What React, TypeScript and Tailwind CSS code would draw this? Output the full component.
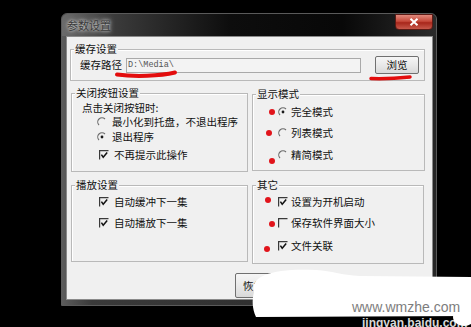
import React from 'react';

const cjk = "font-['Noto_Sans_CJK_SC','Noto_Sans',sans-serif]";

function Radio({ checked }: { checked?: boolean }) {
  return (
    <svg width="10" height="10" viewBox="0 0 10 10" className="shrink-0">
      <path d="M8 2 A4.2 4.2 0 0 0 2 8" fill="none" stroke="#6a6a6a" strokeWidth="1.1" />
      {checked && <circle cx="5" cy="5" r="1.4" fill="#1a1a1a" />}
    </svg>
  );
}

function Check({ checked }: { checked?: boolean }) {
  return (
    <svg width="10" height="10" viewBox="0 0 10 10" className="shrink-0">
      <path d="M0.6 9.5 V0.6 H9.5" fill="none" stroke="#3a3a3a" strokeWidth="1.2" />
      {checked && <path d="M2.4 4.6 L4.2 7.2 L8.2 2.4" fill="none" stroke="#111" strokeWidth="1.5" />}
    </svg>
  );
}

function Dot() {
  return <span className="block w-[6px] h-[6px] rounded-full bg-[#e1141b]" />;
}

function Group({ label, className, children }: { label: string; className: string; children?: React.ReactNode }) {
  return (
    <div className={`relative border border-[#b9b9b9] shadow-[inset_1px_1px_0_#fff] ${className}`}>
      <span className="absolute -top-[8px] left-[3px] px-[1px] bg-[#f0f0f0] leading-[14px]">{label}</span>
      {children}
    </div>
  );
}

export default function App() {
  return (
    <div className={`relative w-[471px] h-[327px] bg-black overflow-hidden pt-[13px] pl-[61px] ${cjk} text-[10.5px] text-[#111]`}>
      {/* window */}
      <div className="w-[376px] h-[293px] rounded-t-[6px] flex flex-col border border-[#5a5a5a] bg-[linear-gradient(90deg,#5c5c5c_0%,#3a3a3a_8%,#262626_100%)]">
        {/* title bar */}
        <div className="h-[22px] flex items-start justify-between bg-[linear-gradient(90deg,#6b6b6b_0%,#3b3b3b_14%,#0d0d0d_45%,#080808_75%,#2a2a2a_100%)] rounded-t-[6px]">
          <span className="mt-[4px] ml-[5px] text-[11px] leading-[14px] text-[#3a3a3a] [text-shadow:0_0_5px_#d8d8d8,0_0_3px_#c4c4c4]">参数设置</span>
          <div className="mr-[3px] w-[38px] h-[16px] rounded-b-[4px] border border-[#5b1a14] bg-[linear-gradient(180deg,#e0897c_0%,#c6493a_45%,#a8271b_55%,#c7584a_100%)] flex items-center justify-center">
            <svg width="10" height="8" viewBox="0 0 10 8">
              <path d="M1.5 0.8 L8.5 7.2 M8.5 0.8 L1.5 7.2" stroke="#fff" strokeWidth="2" />
            </svg>
          </div>
        </div>

        {/* client */}
        <div className="ml-[4px] mr-[3px] h-[264px] bg-[#f0f0f0] border border-[#8a8a8a] flex flex-col">
          {/* cache */}
          <Group label="缓存设置" className="mt-[12px] ml-[3px] w-[355px] h-[32px] flex items-center pl-[9px]">
            <span className="leading-[14px]">缓存路径</span>
            <div className="ml-[4px] w-[235px] h-[15px] border border-[#a9a9a9] bg-[#f3f3f3] flex items-center pl-[1px] font-['Liberation_Mono',monospace] text-[8.5px] text-[#555]">
              D:\Media\
            </div>
            <div className="ml-[14px] w-[44px] h-[18px] rounded-[2px] border border-[#707070] bg-[linear-gradient(180deg,#f6f6f6_0%,#e9e9e9_50%,#d9d9d9_100%)] flex items-center justify-center leading-[14px]">
              浏览
            </div>
          </Group>

          {/* row 2 */}
          <div className="mt-[12px] pl-[4px] flex items-start gap-[4px]">
            <Group label="关闭按钮设置" className="w-[177px] h-[79px] pt-[7px] pl-[10px]">
              <div className="h-[14px] leading-[14px]">点击关闭按钮时:</div>
              <div className="ml-[15px] h-[14px] flex items-center gap-[5px]">
                <Radio />
                <span className="leading-[14px]">最小化到托盘，不退出程序</span>
              </div>
              <div className="ml-[15px] mt-[1px] h-[14px] flex items-center gap-[5px]">
                <Radio checked />
                <span className="leading-[14px]">退出程序</span>
              </div>
              <div className="ml-[17px] mt-[4px] h-[14px] flex items-center gap-[5px]">
                <Check checked />
                <span className="leading-[14px]">不再提示此操作</span>
              </div>
            </Group>

            <Group label="显示模式" className="mt-[1px] w-[173px] h-[77px] pt-[10px] pl-[11px]">
              <div className="h-[14px] flex items-center">
                <div className="w-[14px]"><div className="ml-[5px]"><Dot /></div></div>
                <Radio checked />
                <span className="ml-[3px] leading-[14px]">完全模式</span>
              </div>
              <div className="mt-[7px] h-[14px] flex items-center">
                <div className="w-[14px]"><div className="ml-[2px]"><Dot /></div></div>
                <Radio />
                <span className="ml-[3px] leading-[14px]">列表模式</span>
              </div>
              <div className="mt-[8px] h-[14px] flex items-center">
                <div className="w-[14px]"><div className="ml-[5px] mt-[12px]"><Dot /></div></div>
                <Radio />
                <span className="ml-[3px] leading-[14px]">精简模式</span>
              </div>
            </Group>
          </div>

          {/* row 3 */}
          <div className="mt-[13px] pl-[4px] flex items-start gap-[4px]">
            <Group label="播放设置" className="w-[177px] h-[77px] pt-[9px] pl-[27px]">
              <div className="h-[14px] flex items-center gap-[5px]">
                <Check checked />
                <span className="leading-[14px]">自动缓冲下一集</span>
              </div>
              <div className="mt-[7px] h-[14px] flex items-center gap-[5px]">
                <Check checked />
                <span className="leading-[14px]">自动播放下一集</span>
              </div>
            </Group>

            <Group label="其它" className="w-[172px] h-[79px] pt-[9px] pl-[11px]">
              <div className="h-[14px] flex items-center">
                <div className="w-[14px]"><div className="ml-[1px] -mt-[5px]"><Dot /></div></div>
                <Check checked />
                <span className="ml-[3px] leading-[14px]">设置为开机启动</span>
              </div>
              <div className="mt-[7px] h-[14px] flex items-center">
                <div className="w-[14px]"><div className="ml-[5px] mt-[2px]"><Dot /></div></div>
                <Check />
                <span className="ml-[3px] leading-[14px]">保存软件界面大小</span>
              </div>
              <div className="mt-[9px] h-[14px] flex items-center">
                <div className="w-[14px]"><div className="ml-[0px] mt-[6px]"><Dot /></div></div>
                <Check checked />
                <span className="ml-[3px] leading-[14px]">文件关联</span>
              </div>
            </Group>
          </div>

          {/* bottom button */}
          <div className="mt-[9px] ml-[168px] w-[90px] h-[25px] rounded-[2px] border border-[#707070] bg-[linear-gradient(180deg,#f6f6f6_0%,#e9e9e9_50%,#d9d9d9_100%)] flex items-center pl-[7px] leading-[14px]">
            恢复默认
          </div>
        </div>
      </div>

      {/* red hand-drawn underlines */}
      <svg className="absolute left-0 top-0 pointer-events-none" width="471" height="327" viewBox="0 0 471 327">
        <path d="M117 74.5 C 135 77, 160 76, 175 72.5" fill="none" stroke="#e30c0c" strokeWidth="4" strokeLinecap="round" />
        <path d="M371 78.5 C 385 79, 400 78, 410 77" fill="none" stroke="#e30c0c" strokeWidth="3.5" strokeLinecap="round" />
      </svg>

      {/* watermark */}
      <div className="absolute left-[362px] top-[316px] font-['Liberation_Sans',Arial,sans-serif] font-bold text-[12px] leading-[14px] text-[#d8d8d8]">
        jingyan.baidu.com
      </div>
      <svg className="absolute left-0 top-0 pointer-events-none" width="471" height="327" viewBox="0 0 471 327">
        <path d="M254 292 C 249 274, 278 268, 316 270 C 333 271, 340 275, 360 276 L 471 277 L 471 316 L 256 317 C 252 308, 252 300, 254 292 Z" fill="#fff" />
        <ellipse cx="464" cy="317" rx="11" ry="9" fill="#fff" />
      </svg>
      <div className="absolute left-[352px] top-[299px] font-['Liberation_Sans',Arial,sans-serif] text-[14px] leading-[16px] text-[#7d7d7d]">
        www.wmzhe.com
      </div>
    </div>
  );
}
